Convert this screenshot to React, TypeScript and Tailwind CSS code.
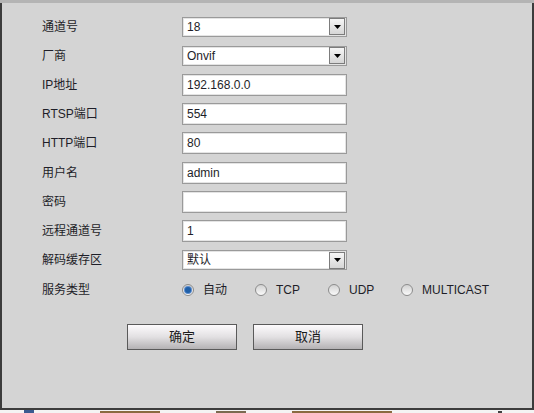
import React from "react";

type Field =
  | { label: string; kind: "select"; value: string; h: number }
  | { label: string; kind: "input"; value: string; h: number };

const fields: Field[] = [
  { label: "通道号", kind: "select", value: "18", h: 29 },
  { label: "厂商", kind: "select", value: "Onvif", h: 29 },
  { label: "IP地址", kind: "input", value: "192.168.0.0", h: 29 },
  { label: "RTSP端口", kind: "input", value: "554", h: 29 },
  { label: "HTTP端口", kind: "input", value: "80", h: 30 },
  { label: "用户名", kind: "input", value: "admin", h: 29 },
  { label: "密码", kind: "input", value: "", h: 29 },
  { label: "远程通道号", kind: "input", value: "1", h: 29 },
  { label: "解码缓存区", kind: "select", value: "默认", h: 30 },
];

const services = ["自动", "TCP", "UDP", "MULTICAST"];

function SelectBox({ value }: { value: string }) {
  return (
    <div className="flex h-[20px] w-[165px] items-center border border-[#9a9a9a] bg-white shadow-[inset_0_0_0_1px_#e4e4e4]">
      <span className="flex-1 pl-[4px] leading-none">{value}</span>
      <span className="mr-[1px] flex h-[17px] w-[16px] items-center justify-center border border-[#7c7c7c] bg-gradient-to-b from-[#f6f6f6] to-[#d6d6d6]">
        <svg width="7" height="4" viewBox="0 0 7 4">
          <path d="M0 0h7L3.5 4z" fill="#000" />
        </svg>
      </span>
    </div>
  );
}

function TextBox({ value }: { value: string }) {
  return (
    <div className="flex h-[22px] w-[165px] items-center border border-[#9a9a9a] bg-white pl-[4px] shadow-[inset_0_0_0_1px_#e4e4e4]">
      {value}
    </div>
  );
}

function Radio({ checked }: { checked: boolean }) {
  return (
    <span className="flex h-[12px] w-[12px] shrink-0 items-center justify-center rounded-full border border-[#8c8c8c] bg-gradient-to-b from-[#d2d2d2] to-[#fafafa]">
      {checked && <span className="h-[6px] w-[6px] rounded-full bg-[#1f5fa8] shadow-[0_0_0_1px_#5c8ccc]" />}
    </span>
  );
}

function PanelButton({ children }: { children: React.ReactNode }) {
  return (
    <button
      type="button"
      className="flex h-[26px] w-[110px] items-center justify-center border border-[#5a5a5a] bg-gradient-to-b from-[#fdfbfd] via-[#e2e0e2] to-[#b4b2b4] text-[13px] text-[#1a1a1a]"
    >
      {children}
    </button>
  );
}

export default function App() {
  return (
    <div className="flex h-[413px] w-[534px] flex-col bg-[#d4d4d4] font-['Liberation_Sans','Noto_Sans_CJK_SC',sans-serif] text-[12px] text-[#1e1e28]">
      <div className="h-[3px] bg-[#b4b4b4]" />
      <div className="flex flex-1">
        <div className="w-[2px] bg-[#3c3c3c]" />
        <div className="flex-1 pl-[40px] pt-[9px]">
          {fields.map((f) => (
            <div key={f.label} className="flex items-center" style={{ height: f.h }}>
              <span className="w-[140px]">{f.label}</span>
              {f.kind === "select" ? <SelectBox value={f.value} /> : <TextBox value={f.value} />}
            </div>
          ))}

          <div className="flex h-[29px] items-center">
            <span className="w-[140px]">服务类型</span>
            {services.map((s, i) => (
              <div key={s} className="flex w-[73px] items-center gap-[9px]">
                <Radio checked={i === 0} />
                <span>{s}</span>
              </div>
            ))}
          </div>

          <div className="ml-[85px] mt-[20px] flex gap-[16px]">
            <PanelButton>确定</PanelButton>
            <PanelButton>取消</PanelButton>
          </div>
        </div>
        <div className="w-[2px] bg-[#3c3c3c]" />
      </div>
      <div className="h-[2px] bg-[#3c3c3c]" />
      <div className="flex h-[3px] items-end gap-[6px] bg-[#f4f4f4] pl-[24px]">
        <span className="h-[3px] w-[10px] bg-[#3a5a90]" />
        <span className="ml-[60px] h-[2px] w-[60px] bg-[#8a6a40]" />
        <span className="ml-[50px] h-[2px] w-[30px] bg-[#7a6a50]" />
        <span className="ml-[40px] h-[2px] w-[100px] bg-[#8a6a40]" />
        <span className="ml-[100px] h-[2px] w-[4px] bg-[#404040]" />
      </div>
    </div>
  );
}
